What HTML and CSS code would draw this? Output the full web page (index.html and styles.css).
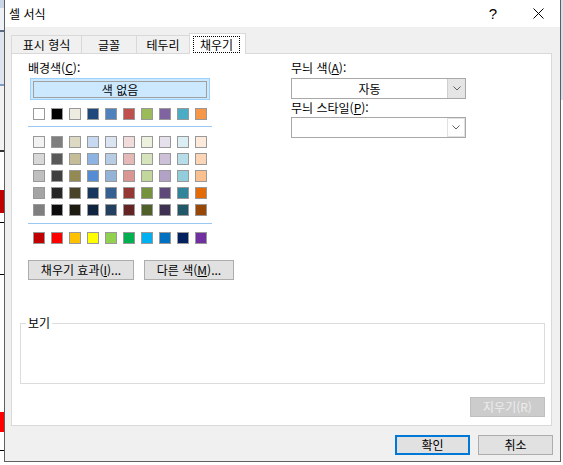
FILE: index.html
```html
<!DOCTYPE html>
<html lang="ko">
<head>
<meta charset="utf-8">
<title>셀 서식</title>
<link rel="stylesheet" href="styles.css">
</head>
<body>
<div class="dialog">
  <div class="titlebar">
    <span class="title">셀 서식</span>
    <span class="help">?</span>
    <span class="close"><svg width="11" height="11" viewBox="0 0 11 11"><path d="M0.5 0.5 L10.5 10.5 M10.5 0.5 L0.5 10.5" stroke="#000" stroke-width="1" fill="none"/></svg></span>
  </div>
  <div class="body">
    <div class="tabs">
      <div class="tab t1">표시 형식</div>
      <div class="tab t2">글꼴</div>
      <div class="tab t3">테두리</div>
      <div class="tab active"><span class="focus">채우기</span></div>
    </div>
    <div class="panel">
      <div class="top">
        <div class="left">
          <div class="label">배경색(<u>C</u>):</div>
          <div class="nocolor"><div class="nocolor-in">색 없음</div></div>
          <div class="swrow first">
            <span class="sw" style="background:#FFFFFF"></span>
            <span class="sw" style="background:#000000"></span>
            <span class="sw" style="background:#EEECE1"></span>
            <span class="sw" style="background:#1F497D"></span>
            <span class="sw" style="background:#4F81BD"></span>
            <span class="sw" style="background:#C0504D"></span>
            <span class="sw" style="background:#9BBB59"></span>
            <span class="sw" style="background:#8064A2"></span>
            <span class="sw" style="background:#4BACC6"></span>
            <span class="sw" style="background:#F79646"></span>
          </div>
          <div class="sep"></div>
          <div class="tints">
            <div class="swrow">
              <span class="sw" style="background:#F2F2F2"></span>
              <span class="sw" style="background:#7F7F7F"></span>
              <span class="sw" style="background:#DDD9C3"></span>
              <span class="sw" style="background:#C6D9F0"></span>
              <span class="sw" style="background:#DBE5F1"></span>
              <span class="sw" style="background:#F2DCDB"></span>
              <span class="sw" style="background:#EBF1DD"></span>
              <span class="sw" style="background:#E5E0EC"></span>
              <span class="sw" style="background:#DBEEF3"></span>
              <span class="sw" style="background:#FDEADA"></span>
            </div>
            <div class="swrow">
              <span class="sw" style="background:#D8D8D8"></span>
              <span class="sw" style="background:#595959"></span>
              <span class="sw" style="background:#C4BD97"></span>
              <span class="sw" style="background:#8DB3E2"></span>
              <span class="sw" style="background:#B8CCE4"></span>
              <span class="sw" style="background:#E5B9B7"></span>
              <span class="sw" style="background:#D7E3BC"></span>
              <span class="sw" style="background:#CCC1D9"></span>
              <span class="sw" style="background:#B7DDE8"></span>
              <span class="sw" style="background:#FBD5B5"></span>
            </div>
            <div class="swrow">
              <span class="sw" style="background:#BFBFBF"></span>
              <span class="sw" style="background:#3F3F3F"></span>
              <span class="sw" style="background:#938953"></span>
              <span class="sw" style="background:#548DD4"></span>
              <span class="sw" style="background:#95B3D7"></span>
              <span class="sw" style="background:#D99694"></span>
              <span class="sw" style="background:#C3D69B"></span>
              <span class="sw" style="background:#B2A2C7"></span>
              <span class="sw" style="background:#92CDDC"></span>
              <span class="sw" style="background:#FAC08F"></span>
            </div>
            <div class="swrow">
              <span class="sw" style="background:#A5A5A5"></span>
              <span class="sw" style="background:#262626"></span>
              <span class="sw" style="background:#494429"></span>
              <span class="sw" style="background:#17365D"></span>
              <span class="sw" style="background:#366092"></span>
              <span class="sw" style="background:#953734"></span>
              <span class="sw" style="background:#76923C"></span>
              <span class="sw" style="background:#5F497A"></span>
              <span class="sw" style="background:#31859B"></span>
              <span class="sw" style="background:#E36C09"></span>
            </div>
            <div class="swrow">
              <span class="sw" style="background:#7F7F7F"></span>
              <span class="sw" style="background:#0C0C0C"></span>
              <span class="sw" style="background:#1D1B10"></span>
              <span class="sw" style="background:#0F243E"></span>
              <span class="sw" style="background:#244061"></span>
              <span class="sw" style="background:#632423"></span>
              <span class="sw" style="background:#4F6128"></span>
              <span class="sw" style="background:#3F3151"></span>
              <span class="sw" style="background:#205867"></span>
              <span class="sw" style="background:#974806"></span>
            </div>
          </div>
          <div class="sep sep2"></div>
          <div class="swrow std">
            <span class="sw" style="background:#C00000"></span>
            <span class="sw" style="background:#FF0000"></span>
            <span class="sw" style="background:#FFC000"></span>
            <span class="sw" style="background:#FFFF00"></span>
            <span class="sw" style="background:#92D050"></span>
            <span class="sw" style="background:#00B050"></span>
            <span class="sw" style="background:#00B0F0"></span>
            <span class="sw" style="background:#0070C0"></span>
            <span class="sw" style="background:#002060"></span>
            <span class="sw" style="background:#7030A0"></span>
          </div>
          <div class="btns">
            <button class="btn effects">채우기 효과(<u>I</u>)...</button>
            <button class="btn more">다른 색(<u>M</u>)...</button>
          </div>
        </div>
        <div class="right">
          <div class="label">무늬 색(<u>A</u>):</div>
          <div class="combo">
            <span class="val">자동</span>
            <span class="arrow"><svg width="8" height="5" viewBox="0 0 8 5"><path d="M0.5 0.5 L4 4 L7.5 0.5" stroke="#606060" fill="none"/></svg></span>
          </div>
          <div class="label label2">무늬 스타일(<u>P</u>):</div>
          <div class="combo combo2">
            <span class="val"></span>
            <span class="arrow"><svg width="8" height="5" viewBox="0 0 8 5"><path d="M0.5 0.5 L4 4 L7.5 0.5" stroke="#606060" fill="none"/></svg></span>
          </div>
        </div>
      </div>
      <div class="preview"><span class="legend">보기</span></div>
      <div class="clear-row"><button class="btn clear">지우기(R)</button></div>
    </div>
    <div class="footer">
      <button class="btn ok">확인</button>
      <button class="btn cancel">취소</button>
    </div>
  </div>
</div>
</body>
</html>
```

FILE: styles.css
```css
* { box-sizing: border-box; }
html, body { margin: 0; padding: 0; }
body {
  width: 563px;
  height: 465px;
  overflow: hidden;
  font-family: "Noto Sans CJK KR", "Noto Sans", "Liberation Sans", sans-serif;
  font-size: 12px;
  color: #000;
  background:
    linear-gradient(to bottom, #c9d6e8 0 8px, #eef1f5 8px 30px, #5a6b80 30px 32px, #dfe5ee 32px 84px, #7f9cc7 84px 86px, #f2f2f2 86px 150px, #333 150px 152px, #fff 152px 190px, #c00000 190px 213px, #fff 213px 222px, #000 222px 223px, #fff 223px 274px, #000 274px 275px, #fff 275px 412px, #ff0000 412px 432px, #fff 432px 450px, #000 450px 451px, #fff 451px) left top / 4px 100% no-repeat,
    linear-gradient(to bottom, #d3deec 0 100px, #fff 100px) right top / 3px 100% no-repeat,
    #fff;
}

.dialog {
  margin-left: 4px;
  width: 557px;
  height: 462px;
  border: 1px solid #5f5f5f;
  border-top: none;
  background: #f0f0f0;
  display: flex;
  flex-direction: column;
}

.titlebar {
  height: 27px;
  flex: none;
  background: #fff;
  display: flex;
  align-items: center;
  padding-left: 4px;
}
.title { font-size: 12px; line-height: 16px; }
.help {
  margin-left: auto;
  width: 46px;
  text-align: center;
  font-family: "Liberation Sans", sans-serif;
  font-size: 15px;
  line-height: 16px;
}
.close {
  width: 44px;
  height: 27px;
  display: flex;
  align-items: center;
  justify-content: center;
}
.close svg { display: block; }

.body {
  flex: 1;
  padding: 6px 8px 0 6px;
  display: flex;
  flex-direction: column;
}

.tabs {
  height: 20px;
  display: flex;
  align-items: flex-end;
}
.tab {
  height: 18px;
  border: 1px solid #d9d9d9;
  border-bottom: none;
  background: #f0f0f0;
  display: flex;
  align-items: center;
  justify-content: center;
  line-height: 16px;
  margin-left: -1px;
}
.t1 { width: 71px; margin-left: 0; }
.t2 { width: 56px; }
.t3 { width: 54px; }
.tab.active {
  width: 57px;
  height: 21px;
  margin-bottom: -1px;
  background: #fff;
  position: relative;
  z-index: 1;
  align-items: flex-start;
  justify-content: flex-start;
  padding: 2px 0 0 3px;
}
.focus {
  width: 47px;
  height: 17px;
  border: 1px dotted #000;
  display: flex;
  align-items: center;
  justify-content: center;
  line-height: 15px;
}

.panel {
  width: 541px;
  height: 373px;
  flex: none;
  border: 1px solid #d9d9d9;
  background: #fff;
  padding: 6px 0 0 8px;
}

.top {
  display: flex;
  padding-left: 8px;
  height: 220px;
}
.left { width: 263px; }
.label { line-height: 16px; height: 16px; white-space: nowrap; }

.nocolor {
  margin: 2px 0 0 2px;
  width: 180px;
  height: 22px;
  border: 1px solid #99d1ff;
  background: #cce8ff;
  padding: 2px 2px 1px 2px;
}
.nocolor-in {
  height: 17px;
  border: 1px solid #a0a0a0;
  display: flex;
  align-items: center;
  justify-content: center;
  line-height: 15px;
}

.swrow {
  display: flex;
  gap: 6px;
  margin-left: 5px;
}
.swrow.first { margin-top: 8px; }
.sw {
  width: 12px;
  height: 12px;
  border: 1px solid #999999;
  display: block;
}
.sep {
  width: 184px;
  height: 1px;
  background: #99c9f2;
  margin-top: 6px;
}
.tints {
  margin-top: 9px;
  display: flex;
  flex-direction: column;
  gap: 5px;
}
.sep2 { margin-top: 7px; }
.swrow.std { margin-top: 8px; }

.btns {
  margin-top: 16px;
  display: flex;
  gap: 10px;
}
.btn {
  font-family: "Noto Sans CJK KR", "Noto Sans", "Liberation Sans", sans-serif;
  font-size: 12px;
  line-height: 16px;
  color: #000;
  background: #e1e1e1;
  border: 1px solid #adadad;
  padding: 0;
  margin: 0;
  height: 20px;
  display: flex;
  align-items: center;
  justify-content: center;
}
.effects { width: 106px; }
.more { width: 90px; }

.right { width: 175px; }
.combo {
  margin-top: 2px;
  width: 175px;
  height: 21px;
  border: 1px solid #a8a8a8;
  background: #fff;
  display: flex;
}
.combo .val {
  flex: 1;
  display: flex;
  align-items: center;
  justify-content: center;
  line-height: 16px;
}
.combo .arrow {
  width: 18px;
  background: #e5e5e5;
  border-left: 1px solid #d0d0d0;
  display: flex;
  align-items: center;
  justify-content: center;
}
.combo svg { display: block; }
.label2 { margin-top: 1px; }
.combo2 { margin-top: 1px; }
.combo2 .arrow {
  background: #fff;
  border: 1px solid #e0e0e0;
  margin: 0;
}

.preview {
  position: relative;
  margin-top: 43px;
  width: 525px;
  height: 61px;
  border: 1px solid #dcdcdc;
}
.legend {
  position: absolute;
  left: 5px;
  top: -9px;
  line-height: 16px;
  padding: 0 2px;
  background: #fff;
}

.clear-row {
  width: 525px;
  display: flex;
  justify-content: flex-end;
  margin-top: 13px;
}
.clear {
  width: 75px;
  background: #cccccc;
  border-color: #bfbfbf;
  color: #ececec;
}

.footer {
  margin-top: 9px;
  margin-right: -1px;
  display: flex;
  justify-content: flex-end;
  gap: 8px;
}
.ok, .cancel { width: 75px; }
.ok { border: 2px solid #0078d7; }
```
